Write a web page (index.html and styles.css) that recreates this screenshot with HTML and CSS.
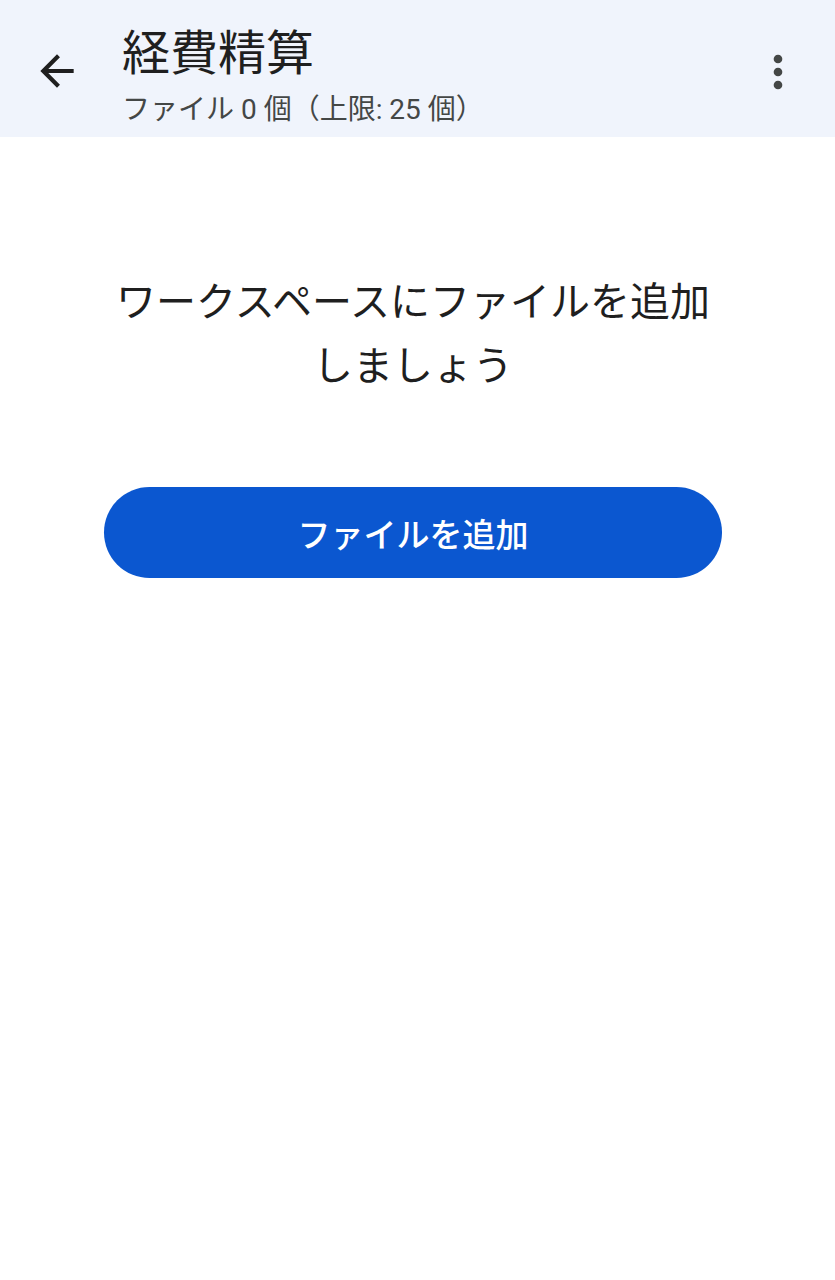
FILE: index.html
```html
<!DOCTYPE html>
<html lang="ja">
<head>
<meta charset="utf-8">
<link rel="stylesheet" href="styles.css">
</head>
<body>
<header class="appbar">
  <div class="icon-btn back">
    <svg viewBox="0 0 24 24" width="50" height="50"><path d="M20 11H7.83l5.59-5.59L12 4l-8 8 8 8 1.41-1.41L7.83 13H20v-2z" fill="#1f1f1f"/></svg>
  </div>
  <div class="titles">
    <div class="title">経費精算</div>
    <div class="subtitle">ファイル 0 個（上限: 25 個）</div>
  </div>
  <div class="icon-btn more">
    <svg viewBox="0 0 24 24" width="52" height="52"><circle cx="12" cy="6" r="2" fill="#444746"/><circle cx="12" cy="12" r="2" fill="#444746"/><circle cx="12" cy="18" r="2" fill="#444746"/></svg>
  </div>
</header>
<main class="content">
  <p class="empty">ワークスペースにファイルを追加<br>しましょう</p>
  <button class="add-btn">ファイルを追加</button>
</main>
</body>
</html>
```
FILE: styles.css
```css
html, body {
  margin: 0;
  padding: 0;
  background: #ffffff;
  font-family: "Roboto", "Noto Sans CJK JP", sans-serif;
}
.appbar {
  height: 137px;
  background: #f0f4fc;
  display: flex;
  align-items: flex-start;
  box-sizing: border-box;
}
.icon-btn {
  display: flex;
  align-items: center;
  justify-content: center;
}
.back {
  width: 50px;
  height: 50px;
  margin: 46px 0 0 32px;
}
.titles {
  margin-left: 40px;
  flex: 1;
  display: flex;
  flex-direction: column;
}
.title {
  font-family: "Noto Sans CJK JP", sans-serif;
  font-size: 48px;
  line-height: 56px;
  color: #1f1f1f;
  margin-top: 21px;
}
.subtitle {
  font-size: 28px;
  line-height: 36px;
  color: #444746;
  margin-top: 15px;
}
.more {
  width: 52px;
  height: 52px;
  margin: 46px 31px 0 0;
}
.content {
  padding: 0 113px 0 104px;
  display: flex;
  flex-direction: column;
  align-items: stretch;
}
.empty {
  margin: 130px 0 0 0;
  text-align: center;
  font-family: "Noto Sans CJK JP", sans-serif;
  font-size: 40px;
  line-height: 64px;
  color: #1f1f1f;
}
.add-btn {
  margin-top: 92px;
  height: 91px;
  border: none;
  border-radius: 46px;
  background: #0b57d0;
  color: #ffffff;
  font-family: "Noto Sans CJK JP", sans-serif;
  font-size: 33px;
  font-weight: 500;
  padding: 0;
}
```
